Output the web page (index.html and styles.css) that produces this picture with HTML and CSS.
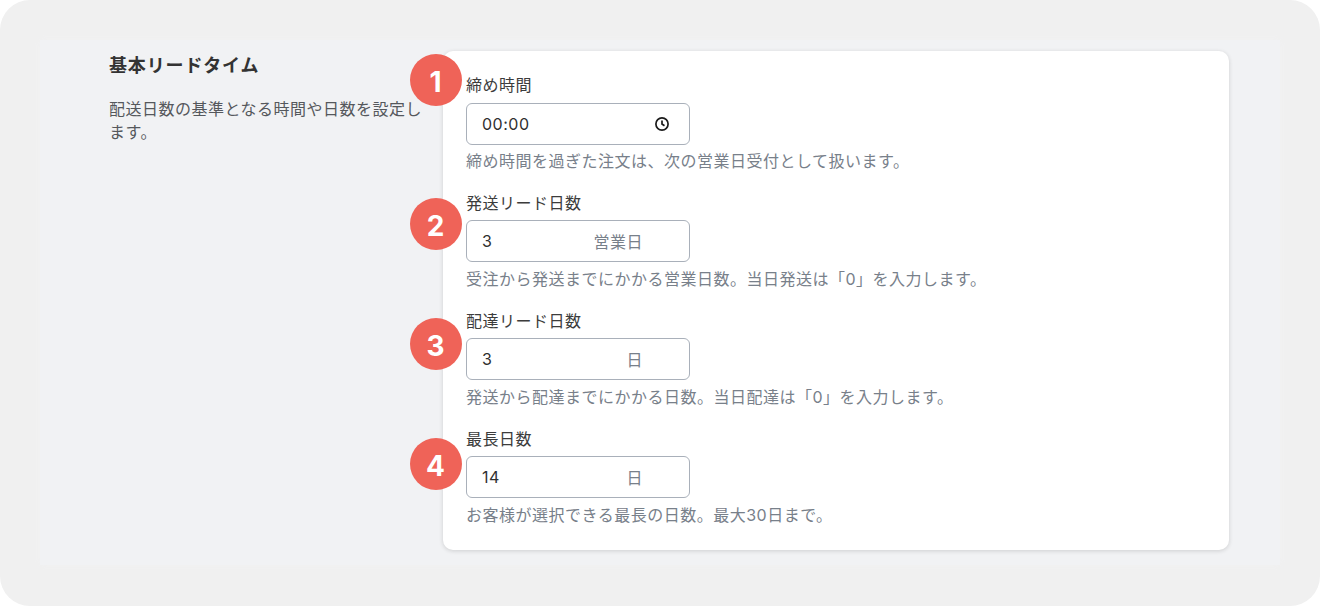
FILE: index.html
```html
<!DOCTYPE html>
<html lang="ja">
<head>
    <meta charset="UTF-8">
    <meta name="viewport" content="width=device-width, initial-scale=1.0">
    <title>基本リードタイム</title>
    <link rel="stylesheet" href="styles.css">
</head>
<body>
    <div class="frame">
        <div class="inner">
            <div class="intro">
                <h2>基本リードタイム</h2>
                <p>配送日数の基準となる時間や日数を設定します。</p>
            </div>
            <div class="card">
                <div class="field">
                    <span class="badge badge-1">1</span>
                    <label for="cutoff">締め時間</label>
                    <div class="input-box">
                        <input id="cutoff" type="text" value="00:00">
                        <svg class="clock" width="16" height="16" viewBox="0 0 16 16" fill="none" stroke="#1a1a1a" stroke-width="1.7">
                            <circle cx="8" cy="8" r="6.1"/>
                            <path d="M8 4.4V8l2.5 1.7"/>
                        </svg>
                    </div>
                    <p class="help">締め時間を過ぎた注文は、次の営業日受付として扱います。</p>
                </div>
                <div class="field">
                    <span class="badge badge-2">2</span>
                    <label for="ship">発送リード日数</label>
                    <div class="input-box">
                        <input id="ship" type="text" value="3">
                        <span class="suffix">営業日</span>
                    </div>
                    <p class="help">受注から発送までにかかる営業日数。当日発送は「0」を入力します。</p>
                </div>
                <div class="field">
                    <span class="badge badge-3">3</span>
                    <label for="deliver">配達リード日数</label>
                    <div class="input-box">
                        <input id="deliver" type="text" value="3">
                        <span class="suffix">日</span>
                    </div>
                    <p class="help">発送から配達までにかかる日数。当日配達は「0」を入力します。</p>
                </div>
                <div class="field">
                    <span class="badge badge-4">4</span>
                    <label for="max">最長日数</label>
                    <div class="input-box">
                        <input id="max" type="text" value="14">
                        <span class="suffix">日</span>
                    </div>
                    <p class="help">お客様が選択できる最長の日数。最大30日まで。</p>
                </div>
            </div>
        </div>
    </div>
</body>
</html>
```

FILE: styles.css
```css
* {
    box-sizing: border-box;
}
html, body {
    margin: 0;
    height: 100%;
    background: #fff;
}
body {
    font-family: Inter, "Noto Sans CJK JP", sans-serif;
    font-size: 16px;
    letter-spacing: 0.5px;
    overflow: hidden;
}
.frame {
    height: 606px;
    padding: 40px 40px 41px;
    background: #f0f0f0;
    border-radius: 30px;
}
.inner {
    display: flex;
    gap: 20px;
    height: 100%;
    padding: 11px 51px 15px 69px;
    background: #f1f2f4;
    box-shadow: 0 0 6px #f1f1f2;
}
.intro {
    width: 314px;
    flex: none;
}
.intro h2 {
    margin: 0;
    padding-top: 2px;
    font-size: 18px;
    line-height: 26px;
    font-weight: 600;
    letter-spacing: 0.85px;
    color: #333;
}
.intro p {
    margin: 19px 0 0;
    line-height: 23px;
    color: #55585c;
}
.card {
    flex: 1;
    padding: 24px 23px 0;
    background: #fff;
    border-radius: 10px;
    box-shadow: 0 1px 4px rgba(26, 26, 26, 0.16);
}
.field {
    position: relative;
    height: 118px;
}
.field label {
    display: block;
    line-height: 20px;
    color: #3c3c3c;
}
.input-box {
    display: flex;
    align-items: center;
    width: 224px;
    height: 42px;
    margin-top: 8px;
    padding: 0 46px 0 15px;
    border: 1px solid #a9b0ba;
    border-radius: 6px;
}
.field + .field .input-box {
    margin-top: 7px;
}
.input-box input {
    flex: 1;
    min-width: 0;
    padding: 0;
    border: 0;
    outline: 0;
    font: inherit;
    letter-spacing: inherit;
    color: #303030;
}
.suffix {
    color: #78808a;
}
.clock {
    flex: none;
    margin-right: -27px;
}
.help {
    margin: 6px 0 0;
    line-height: 20px;
    color: #78808a;
}
.field + .field .help {
    margin-top: 7px;
}
.badge {
    position: absolute;
    left: -56px;
    width: 52px;
    height: 52px;
    border-radius: 50%;
    background: #ef6358;
    color: #fff;
    font-size: 28px;
    font-weight: 700;
    letter-spacing: 0;
    line-height: 57px;
    text-align: center;
    text-indent: -1px;
}
.badge-1 {
    top: -21px;
}
.badge-2 {
    top: 5px;
}
.badge-3 {
    top: 7px;
}
.badge-4 {
    top: 9px;
}
```
